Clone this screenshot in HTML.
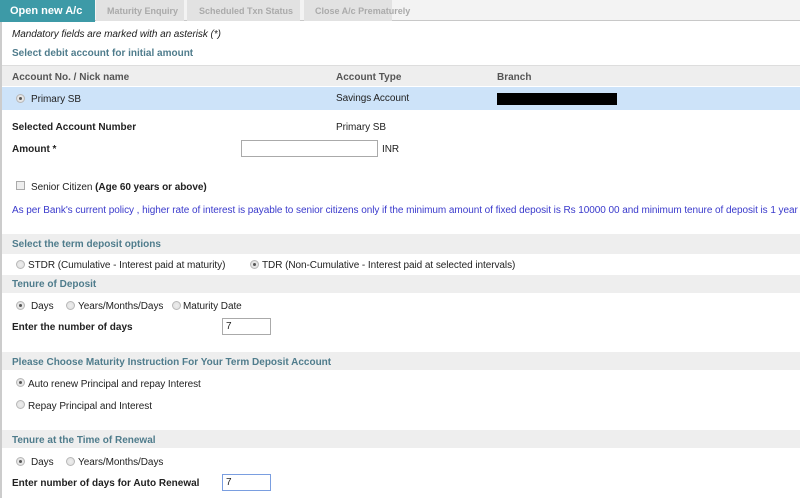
<!DOCTYPE html>
<html><head><style>
*{margin:0;padding:0;box-sizing:border-box}
body{width:800px;height:498px;background:#fff;font-family:"Liberation Sans",Arial,sans-serif;font-size:10px;letter-spacing:-0.06px;color:#222;position:relative;overflow:hidden}
.a{position:absolute;white-space:nowrap;line-height:12px;margin-top:1px}
.b{font-weight:bold;letter-spacing:0}
.h{color:#4f7c8c;font-weight:bold;letter-spacing:0}
.bar{position:absolute;left:2px;width:798px;background:#eeeeee}
.r{position:absolute;width:9px;height:9px;border-radius:50%;border:1px solid #b8b8b8;background:radial-gradient(circle,#eee 0,#ddd 100%);margin-top:1px}
.r.on::after{content:"";position:absolute;left:2px;top:2px;width:3px;height:3px;border-radius:50%;background:#555}
.in{position:absolute;border:1px solid #aaa;background:#fff;font-size:10px;padding-left:3px;line-height:15px}
</style></head><body>
<div style="position:absolute;left:0;top:0;width:800px;height:21px;background:#f3f3f3;border-bottom:1px solid #c8c8c8"></div>
<div style="position:absolute;left:0;top:0;width:95px;height:22px;background:#3d9aa7"></div>
<div class="a b" style="left:10px;top:4px;color:#fff;font-size:11px">Open new A/c</div>
<div style="position:absolute;left:96px;top:0;width:88px;height:21px;background:#e2e2e2"></div>
<div style="position:absolute;left:187px;top:0;width:113px;height:21px;background:#e2e2e2"></div>
<div style="position:absolute;left:304px;top:0;width:88px;height:21px;background:#e2e2e2"></div>
<div class="a b" style="left:107px;top:4px;color:#aaa;font-size:9px">Maturity Enquiry</div>
<div class="a b" style="left:199px;top:4px;color:#aaa;font-size:9px">Scheduled Txn Status</div>
<div class="a b" style="left:315px;top:4px;color:#aaa;font-size:9px">Close A/c Prematurely</div>
<div style="position:absolute;left:0;top:22px;width:2px;height:476px;background:#ccc"></div>
<div class="a" style="left:12px;top:28px;font-style:italic">Mandatory fields are marked with an asterisk (*)</div>
<div class="a h" style="left:12px;top:47px">Select debit account for initial amount</div>
<div class="bar" style="top:65px;height:21px;border-top:1px solid #ddd"></div>
<div class="a b" style="left:12px;top:71px;color:#555">Account No. / Nick name</div>
<div class="a b" style="left:336px;top:71px;color:#555">Account Type</div>
<div class="a b" style="left:497px;top:71px;color:#555">Branch</div>
<div style="position:absolute;left:2px;top:87px;width:798px;height:23px;background:#cde3f9"></div>
<div class="r on" style="left:16px;top:93px"></div>
<div class="a" style="left:31px;top:93px">Primary SB</div>
<div class="a" style="left:336px;top:92px">Savings Account</div>
<div style="position:absolute;left:497px;top:93px;width:120px;height:12px;background:#000"></div>
<div class="a b" style="left:12px;top:121px">Selected Account Number</div>
<div class="a" style="left:336px;top:121px">Primary SB</div>
<div class="a b" style="left:12px;top:143px">Amount *</div>
<div class="in" style="left:241px;top:140px;width:137px;height:17px"></div>
<div class="a" style="left:382px;top:143px">INR</div>
<div style="position:absolute;left:16px;top:181px;width:9px;height:9px;border:1px solid #aaa;background:#eee"></div>
<div class="a" style="left:31px;top:181px">Senior Citizen <b>(Age 60 years or above)</b></div>
<div class="a" style="left:12px;top:204px;color:#3a3acc">As per Bank's current policy , higher rate of interest is payable to senior citizens only if the minimum amount of fixed deposit is Rs 10000 00 and minimum tenure of deposit is 1 year</div>
<div class="bar" style="top:234px;height:20px"></div>
<div class="a h" style="left:12px;top:238px">Select the term deposit options</div>
<div class="r" style="left:16px;top:259px"></div>
<div class="a" style="left:28px;top:259px">STDR (Cumulative - Interest paid at maturity)</div>
<div class="r on" style="left:250px;top:259px"></div>
<div class="a" style="left:262px;top:259px">TDR (Non-Cumulative - Interest paid at selected intervals)</div>
<div class="bar" style="top:275px;height:18px"></div>
<div class="a h" style="left:12px;top:278px">Tenure of Deposit</div>
<div class="r on" style="left:16px;top:300px"></div>
<div class="a" style="left:31px;top:300px">Days</div>
<div class="r" style="left:66px;top:300px"></div>
<div class="a" style="left:78px;top:300px">Years/Months/Days</div>
<div class="r" style="left:172px;top:300px"></div>
<div class="a" style="left:183px;top:300px">Maturity Date</div>
<div class="a b" style="left:12px;top:321px">Enter the number of days</div>
<div class="in" style="left:222px;top:318px;width:49px;height:17px">7</div>
<div class="bar" style="top:352px;height:18px"></div>
<div class="a h" style="left:12px;top:356px">Please Choose Maturity Instruction For Your Term Deposit Account</div>
<div class="r on" style="left:16px;top:377px"></div>
<div class="a" style="left:28px;top:378px">Auto renew Principal and repay Interest</div>
<div class="r" style="left:16px;top:399px"></div>
<div class="a" style="left:28px;top:400px">Repay Principal and Interest</div>
<div class="bar" style="top:430px;height:18px"></div>
<div class="a h" style="left:12px;top:434px">Tenure at the Time of Renewal</div>
<div class="r on" style="left:16px;top:456px"></div>
<div class="a" style="left:31px;top:456px">Days</div>
<div class="r" style="left:66px;top:456px"></div>
<div class="a" style="left:78px;top:456px">Years/Months/Days</div>
<div class="a b" style="left:12px;top:477px">Enter number of days for Auto Renewal</div>
<div class="in" style="left:222px;top:474px;width:49px;height:17px;border-color:#7a9ee0">7</div>
</body></html>
